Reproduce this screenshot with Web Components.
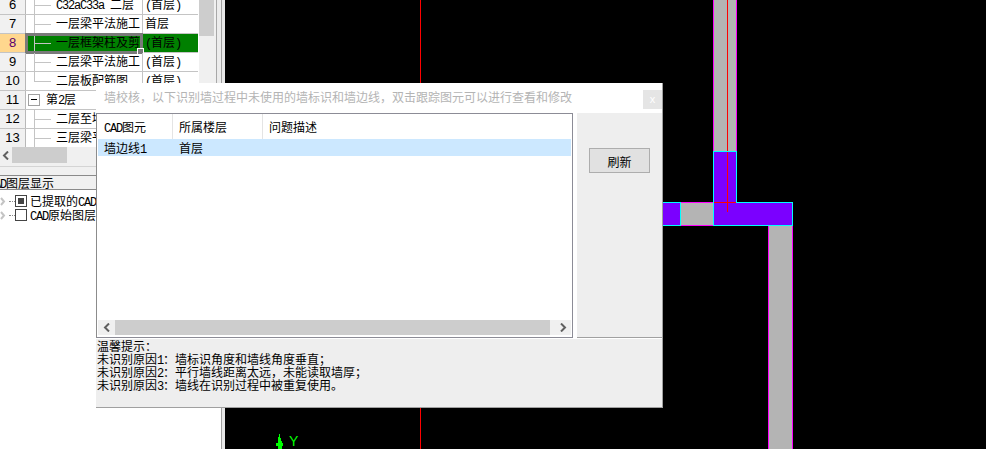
<!DOCTYPE html>
<html lang="zh">
<head>
<meta charset="utf-8">
<title>墙校核</title>
<style>
    html, body { margin: 0; height: 100%; overflow: hidden; background: #000; }
    body {
        font: 12px/14px "Noto Sans CJK SC", "Liberation Sans", sans-serif;
        color: #000;
    }
    cad-app { width: 986px; height: 449px; }
</style>
</head>
<body>
<cad-app>
    <drawing-tree slot="left">
        <tree-row num="6" name="C32aC33a 二层" floor="(首层)" kind="leaf"></tree-row>
        <tree-row num="7" name="一层梁平法施工" floor="首层" kind="leaf"></tree-row>
        <tree-row num="8" name="一层框架柱及剪" floor="(首层)" kind="leaf" selected></tree-row>
        <tree-row num="9" name="二层梁平法施工" floor="(首层)" kind="leaf"></tree-row>
        <tree-row num="10" name="二层板配筋图" floor="(首层)" kind="last"></tree-row>
        <tree-row num="11" name="第2层" kind="group"></tree-row>
        <tree-row num="12" name="二层至墙" kind="leaf"></tree-row>
        <tree-row num="13" name="三层梁平" kind="leaf"></tree-row>
    </drawing-tree>
    <cad-canvas slot="canvas"></cad-canvas>
    <check-dialog slot="dialog">
        <span slot="title">墙校核，以下识别墙过程中未使用的墙标识和墙边线，双击跟踪图元可以进行查看和修改</span>
        <div slot="tips">温馨提示：</div>
        <div slot="tips">未识别原因<en-t>1</en-t>：墙标识角度和墙线角度垂直；</div>
        <div slot="tips">未识别原因<en-t>2</en-t>：平行墙线距离太远，未能读取墙厚；</div>
        <div slot="tips">未识别原因<en-t>3</en-t>：墙线在识别过程中被重复使用。</div>
    </check-dialog>
</cad-app>

<script>
// 半角字符：原图是宋体，每个西文字符占 6px
class EnText extends HTMLElement {
    constructor() {
        super();
        this.attachShadow({ mode: 'open' });
        // 不能留空白：white-space: pre 会把模板里的换行也排出来
        // line-height: 0 防止混排两种字体时把行高撑大
        this.shadowRoot.innerHTML = `<style>:host { display: inline; font-family: "Liberation Mono", monospace; letter-spacing: -1.2px; line-height: 0; white-space: pre; }</style><slot></slot>`;
    }
}
customElements.define('en-t', EnText);

function wrapLatin(text) {
    return text.replace(/[\x20-\x7e]+/g, m => `<en-t>${m}</en-t>`);
}

class CadApp extends HTMLElement {
    constructor() {
        super();
        this.attachShadow({ mode: 'open' });
        this.shadowRoot.innerHTML = `
            <style>
                :host { display: grid; grid-template-columns: 225px 1fr; position: relative; overflow: hidden; }
                .dialog { position: absolute; left: 96px; top: 83px; }
            </style>
            <slot name="left"></slot>
            <slot name="canvas"></slot>
            <div class="dialog"><slot name="dialog"></slot></div>
        `;
    }
}
customElements.define('cad-app', CadApp);

// 滚动条：箭头和滑块的宽度由 CSS 变量给出
class ScrollBar extends HTMLElement {
    constructor() {
        super();
        this.attachShadow({ mode: 'open' });
        this.shadowRoot.innerHTML = `
            <style>
                :host { display: flex; height: var(--bar, 16px); background: #f0f0f0; }
                .arrow { flex: none; width: var(--arrow, 17px); display: flex; align-items: center; justify-content: center; }
                .thumb { flex: none; width: var(--thumb, 100px); background: #cdcdcd; }
                .rest { flex: 1; }
                svg { display: block; }
            </style>
            <div class="arrow"><svg width="8" height="9" viewBox="0 0 8 9"><path d="M6 .5 2 4.5l4 4" fill="none" stroke="#606060" stroke-width="2"/></svg></div>
            <div class="thumb"></div>
            <div class="rest"></div>
            <div class="arrow"><svg width="8" height="9" viewBox="0 0 8 9"><path d="M2 .5l4 4-4 4" fill="none" stroke="#606060" stroke-width="2"/></svg></div>
        `;
    }
}
customElements.define('scroll-bar', ScrollBar);

class TreeRow extends HTMLElement {
    constructor() {
        super();
        this.attachShadow({ mode: 'open' });
    }

    connectedCallback() {
        const kind = this.getAttribute('kind');
        const lead = kind === 'group' ? `<span class="box"></span>` : `<span class="branch ${kind}"></span>`;
        this.shadowRoot.innerHTML = `
            <style>
                :host { display: grid; grid-template-columns: 26px 117px 55px; height: 19px; box-sizing: border-box; border-bottom: 1px solid #c4c4c4; position: relative; }
                .num { background: #f1f1f1; border-right: 1px solid #b8b8b8; text-align: center; font: 13px/17px "Liberation Sans", sans-serif; }
                .name { display: flex; align-items: center; white-space: nowrap; overflow: hidden; border-right: 1px solid #c4c4c4; height: 18px; }
                .name span:last-child { padding-bottom: 2px; }
                .floor { line-height: 16px; padding-left: 2px; white-space: nowrap; height: 18px; overflow: hidden; }
                .branch { flex: none; width: 17px; height: 100%; margin: 0 5px 0 8px; box-sizing: border-box; position: relative; border-left: 1px solid #c4c4c4; }
                .branch::after { content: ""; position: absolute; left: 0; right: 0; top: 9px; border-top: 1px solid #c4c4c4; }
                .branch.last { height: 10px; align-self: flex-start; }
                .box { flex: none; width: 12px; height: 12px; box-sizing: border-box; margin: 0 6px 0 2px; border: 1px solid #a0a0a0; position: relative; background: #fff; }
                .box::after { content: ""; position: absolute; left: 2px; right: 2px; top: 4px; border-top: 1px solid #000; }
                :host([selected]) .num { background: #ffd78e; color: #5a006e; }
                :host([selected]) .name, :host([selected]) .floor { background: #008000; }
                :host([selected]) .cursor { position: absolute; left: 25px; top: -1px; width: 118px; height: 21px; box-sizing: border-box; border: 3px solid #7a7a7a; }
                :host([selected]) .cursor::after { content: ""; position: absolute; right: -4px; bottom: -4px; width: 5px; height: 5px; background: #7a7a7a; border: 1px solid #fff; }
            </style>
            <div class="num">${this.getAttribute('num')}</div>
            <div class="name">${lead}<span>${wrapLatin(this.getAttribute('name'))}</span></div>
            <div class="floor">${wrapLatin(this.getAttribute('floor') || '')}</div>
            <div class="cursor"></div>
        `;
    }
}
customElements.define('tree-row', TreeRow);

class LayerItem extends HTMLElement {
    constructor() {
        super();
        this.attachShadow({ mode: 'open' });
        this.shadowRoot.innerHTML = `
            <style>
                :host { display: flex; align-items: center; height: 14px; white-space: nowrap; overflow: hidden; }
                svg { flex: none; width: 9px; }
                .dots { flex: none; width: 6px; border-top: 1px dotted #888; }
                .check { flex: none; width: 12px; height: 12px; box-sizing: border-box; border: 1px solid #444; margin-right: 3px; padding: 2px; background: #fff; }
                :host([checked]) .check::before { content: ""; display: block; width: 6px; height: 6px; background: #444; }
            </style>
            <svg height="9" viewBox="0 0 9 9"><path d="M1 1l3 3.5-3 3.5" fill="none" stroke="#c4c4c4" stroke-width="2"/></svg>
            <span class="dots"></span><span class="check"></span><span class="label"><slot></slot></span>
        `;
    }
}
customElements.define('layer-item', LayerItem);

class DrawingTree extends HTMLElement {
    constructor() {
        super();
        this.attachShadow({ mode: 'open' });
        this.shadowRoot.innerHTML = `
            <style>
                :host { display: flex; flex-direction: column; width: 225px; height: 449px; box-sizing: border-box; background: #e8e8e8; overflow: hidden; }
                .inner { flex: 1; display: flex; flex-direction: column; width: 221px; background: #fff; border-right: 1px solid #a0a0a0; min-height: 0; }
                .top { display: flex; height: 147px; overflow: hidden; }
                .rows { flex: none; width: 198px; margin-top: -4px; }
                .vbar { flex: none; width: 17px; margin-left: 1px; background: #f0f0f0; border-right: 1px solid #a8a8a8; }
                .vbar div { height: 36px; margin-right: 2px; background: #cdcdcd; }
                .side { flex: 1; background: #ececec; }
                .hbar { display: flex; background: #f0f0f0; }
                scroll-bar { --arrow: 12px; --thumb: 55px; flex: none; width: 198px; }
                .gap { height: 12px; background: #f0f0f0; box-sizing: border-box; border-top: 3px solid #f0f0f0; }
                .gap::before { content: ""; display: block; border-top: 1px solid #d4d4d4; }
                .head-wrap { overflow: hidden; height: 15px; box-sizing: border-box; background: #f0f0f0; border-top: 1px solid #8a8a8a; border-bottom: 1px solid #8a8a8a; }
                .head { margin-left: -12px; line-height: 13px; white-space: nowrap; }
                .layers { padding-top: 4px; background: #fff; flex: 1; }
            </style>
            <div class="inner">
                <div class="top">
                    <div class="rows"><slot></slot></div>
                    <div class="vbar"><div></div></div>
                    <div class="side"></div>
                </div>
                <div class="hbar"><scroll-bar></scroll-bar></div>
                <div class="gap"></div>
                <div class="head-wrap"><div class="head"><en-t>CAD</en-t>图层显示</div></div>
                <div class="layers">
                    <layer-item checked>已提取的<en-t>CAD</en-t></layer-item>
                    <layer-item><en-t>CAD</en-t>原始图层</layer-item>
                </div>
            </div>
        `;
    }
}
customElements.define('drawing-tree', DrawingTree);

// CAD 画布：墙和柱的位置就是内容本身，用 SVG 坐标画
class CadCanvas extends HTMLElement {
    constructor() {
        super();
        this.attachShadow({ mode: 'open' });
        this.shadowRoot.innerHTML = `
            <style>
                :host { display: block; height: 449px; background: #000; }
                svg { display: block; }
                text { font: 14px "Liberation Sans", sans-serif; fill: #00ff00; }
            </style>
            <svg width="761" height="449" viewBox="225 0 761 449" shape-rendering="crispEdges">
                <rect x="420" y="0" width="1" height="449" fill="#ff0000"/>

                <rect x="713" y="-2" width="23" height="154" fill="#b4b4b4"/>
                <path d="M713.5 0V152M736.5 0V152" stroke="#ff00ff" fill="none"/>
                <rect x="727" y="0" width="1" height="152" fill="#ff0000"/>

                <rect x="680" y="203" width="34" height="23" fill="#b4b4b4"/>
                <path d="M680 202.5H714M680 225.5H714" stroke="#ff00ff" fill="none"/>

                <rect x="768" y="226" width="25" height="223" fill="#b4b4b4"/>
                <path d="M768.5 226V449M792.5 226V449" stroke="#ff00ff" fill="none"/>

                <rect x="660" y="202.5" width="20.5" height="23" fill="#7b00ff" stroke="#00ffff"/>
                <path d="M713.5 151.5H736.5V202.5H792.5V225.5H713.5Z" fill="#7b00ff" stroke="#00ffff"/>
                <rect x="714" y="202" width="22" height="1" fill="#ff0000"/>
                <rect x="727" y="152" width="1" height="60" fill="#ff0000"/>

                <path d="M279.5 434L281.5 441V443H283V446H281.5V449H277.5V446H276V443H277.5V441Z" fill="#00ff00"/>
                <text x="289" y="446">Y</text>
            </svg>
        `;
    }
}
customElements.define('cad-canvas', CadCanvas);

class CheckDialog extends HTMLElement {
    constructor() {
        super();
        this.attachShadow({ mode: 'open' });
        this.shadowRoot.innerHTML = `
            <style>
                :host { display: flex; flex-direction: column; width: 567px; height: 325px; box-sizing: border-box; background: #fff; border-right: 1px solid #a0a0a0; border-bottom: 1px solid #a0a0a0; }
                .title { flex: none; display: flex; align-items: center; justify-content: space-between; height: 30px; padding: 0 0 2px 8px; box-sizing: border-box; color: #b4b4b4; }
                .close { width: 19px; height: 19px; margin-top: 5px; background: #e5e5e5; color: #fff; text-align: center; font: 11px/18px "Liberation Sans", sans-serif; }
                .body { flex: none; display: flex; height: 225px; gap: 4px; }
                .list { flex: none; width: 477px; box-sizing: border-box; border: 1px solid #8c8c96; border-left-color: #8c8c8c; display: flex; flex-direction: column; padding: 0 1px 0 1px; }
                .head, .row { flex: none; display: grid; grid-template-columns: 75px 90px 1fr; }
                .head { height: 25px; }
                .head span { line-height: 26px; padding-left: 6px; border-right: 1px solid #e4e4e4; }
                .head span:last-child { border: none; }
                .row { height: 17px; background: #cce8ff; }
                .row span { line-height: 17px; padding-left: 6px; }
                .fill { flex: 1; }
                scroll-bar { --arrow: 17px; --thumb: 435px; --bar: 15px; margin-bottom: 2px; }
                .tools { flex: 1; background: #eee; border-bottom: 1px solid #a0a0a0; padding: 35px 0 0 12px; }
                .btn { width: 61px; height: 25px; box-sizing: border-box; background: #e1e1e1; border: 1px solid #adadad; text-align: center; line-height: 26px; }
                .tips { flex: 1; margin-top: 1px; background: #eee; padding-left: 1px; }
                ::slotted([slot="tips"]) { line-height: 13px; white-space: nowrap; }
            </style>
            <div class="title"><slot name="title"></slot><div class="close">x</div></div>
            <div class="body">
                <div class="list">
                    <div class="head"><span><en-t>CAD</en-t>图元</span><span>所属楼层</span><span>问题描述</span></div>
                    <div class="row"><span>墙边线<en-t>1</en-t></span><span>首层</span><span></span></div>
                    <div class="fill"></div>
                    <scroll-bar></scroll-bar>
                </div>
                <div class="tools"><div class="btn">刷新</div></div>
            </div>
            <div class="tips"><slot name="tips"></slot></div>
        `;
    }
}
customElements.define('check-dialog', CheckDialog);
</script>
</body>
</html>
